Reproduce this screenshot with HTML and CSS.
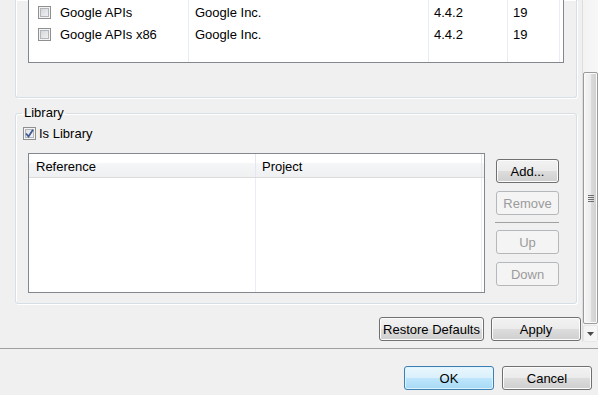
FILE: index.html
```html
<!DOCTYPE html>
<html>
<head>
    <title>Properties - Android</title>
    <link rel="stylesheet" href="styles.css">
</head>
<body>
    <div class="pane">
        <div class="content">
            <div class="group group-top">
                <div class="sdk-table">
                    <div class="col c1">
                        <div class="cell"><span class="check"></span>Google APIs</div>
                        <div class="cell"><span class="check"></span>Google APIs x86</div>
                    </div>
                    <div class="col c2">
                        <div class="cell">Google Inc.</div>
                        <div class="cell">Google Inc.</div>
                    </div>
                    <div class="col c3">
                        <div class="cell">4.4.2</div>
                        <div class="cell">4.4.2</div>
                    </div>
                    <div class="col c4">
                        <div class="cell">19</div>
                        <div class="cell">19</div>
                    </div>
                    <div class="filler"></div>
                </div>
            </div>

            <fieldset class="group library">
                <legend>Library</legend>
                <label class="lib-check">
                    <span class="check checked">
                        <svg width="9" height="9" viewBox="0 0 9 9"><path d="M1 4.5 L3.5 7.5 L8 0.8" fill="none" stroke="#3f5a92" stroke-width="1.8"/></svg>
                    </span>
                    Is Library
                </label>
                <div class="lib-row">
                    <div class="ref-table">
                        <div class="ref-head">
                            <div class="h1">Reference</div>
                            <div class="h2">Project</div>
                        </div>
                        <div class="ref-body">
                            <div class="b1"></div>
                            <div class="b2"></div>
                        </div>
                    </div>
                    <div class="side">
                        <button class="add">Add...</button>
                        <button class="remove" disabled>Remove</button>
                        <div class="side-sep"></div>
                        <button class="up" disabled>Up</button>
                        <button class="down" disabled>Down</button>
                    </div>
                </div>
            </fieldset>

            <div class="apply-row">
                <button class="restore">Restore Defaults</button>
                <button class="apply">Apply</button>
            </div>
        </div>

        <div class="scrollbar">
            <div class="thumb"><span class="grip"></span></div>
            <div class="arrow">
                <svg width="7" height="4" viewBox="0 0 7 4"><path d="M0 0 H7 L3.5 4 Z" fill="#4a4a4a"/></svg>
            </div>
        </div>
    </div>

    <div class="sep"></div>

    <div class="dialog-buttons">
        <button class="default">OK</button>
        <button>Cancel</button>
    </div>
</body>
</html>
```

FILE: styles.css
```css
* {
    box-sizing: border-box;
}

body {
    margin: 0;
    width: 598px;
    height: 395px;
    overflow: hidden;
    background-color: #f0f0f0;
    font-family: "Liberation Sans", Arial, sans-serif;
    font-size: 13px;
    color: #000;
}

.pane {
    display: flex;
    height: 342px;
}

.content {
    width: 581px;
}

/* group boxes */
.group {
    border: 1px solid #d5dfe5;
    border-radius: 3px;
    box-shadow: inset 1px 1px 0 #fff, 1px 1px 0 #fff;
}

.group-top {
    margin: 0 4px 0 15px;
    border-top: none;
    border-radius: 0 0 3px 3px;
    padding: 0 12px 34px 12px;
}

.sdk-table {
    display: flex;
    height: 63px;
    background-color: #fff;
    border: 1px solid #828790;
    border-top: none;
}

.sdk-table .col {
    border-right: 1px solid #e9eef6;
    padding-top: 1px;
}

.c1 { width: 160px; }
.c2 { width: 240px; }
.c3 { width: 79px; }
.c4 { width: 52px; }

.sdk-table .filler {
    flex: 1;
}

.cell {
    height: 22px;
    display: flex;
    align-items: center;
    white-space: nowrap;
}

.c1 .cell { padding-left: 9px; }
.c2 .cell { padding-left: 6px; }
.c3 .cell, .c4 .cell { padding-left: 5px; }

.c1 .check {
    margin-right: 9px;
}

/* checkbox */
.check {
    display: inline-flex;
    align-items: center;
    justify-content: center;
    width: 13px;
    height: 13px;
    flex: none;
    border: 1px solid #8e8f8f;
    background: linear-gradient(135deg, #cdd1d6, #f6f6f6);
    box-shadow: inset 0 0 0 1px #f4f4f4, inset 0 0 0 2px #b2b6bb;
}

.check.checked {
    background: linear-gradient(135deg, #dcdfe3, #f7f7f7);
}

/* library */
.library {
    margin: 7px 4px 0 15px;
    padding: 0;
    min-width: 0;
}

.library legend {
    margin-left: 6px;
    padding: 0 2px;
    line-height: 16px;
}

.lib-check {
    display: flex;
    align-items: center;
    height: 13px;
    gap: 3px;
    margin: 6px 0 0 7px;
}

.lib-row {
    display: flex;
    gap: 11px;
    margin: 13px 17px 10px 12px;
}

.ref-table {
    width: 457px;
    height: 140px;
    display: flex;
    flex-direction: column;
    background-color: #fff;
    border: 1px solid #828790;
}

.ref-head {
    display: flex;
    height: 24px;
    border-bottom: 1px solid #dcdcdc;
    background: linear-gradient(#fff 0, #fff 40%, #f5f6f7 40%, #eff0f2 100%);
}

.ref-head div {
    display: flex;
    align-items: center;
    padding-top: 2px;
    border-right: 1px solid #e3e8ef;
}

.ref-head .h1 { width: 227px; padding-left: 7px; }
.ref-head .h2 { width: 226px; padding-left: 6px; }

.ref-body {
    flex: 1;
    display: flex;
}

.ref-body div {
    border-right: 1px solid #e9eef6;
}

.ref-body .b1 { width: 227px; }
.ref-body .b2 { width: 226px; }

.side {
    width: 63px;
    display: flex;
    flex-direction: column;
}

.side .add { margin-top: 6px; }
.side .remove { margin-top: 8px; }
.side .up { margin-top: 7px; }
.side .down { margin-top: 8px; }

.side-sep {
    height: 1px;
    margin: 7px 0 0 -1px;
    background-color: #a0a0a0;
}

/* buttons */
button {
    font-family: inherit;
    font-size: 13px;
    color: #000;
    height: 24px;
    padding: 0;
    border: 1px solid #707070;
    border-radius: 3px;
    background: linear-gradient(#f2f2f2 0, #ebebeb 50%, #dddddd 50%, #cfcfcf 100%);
    box-shadow: inset 0 0 0 1px #fcfcfc;
}

button:disabled {
    color: #9b9b9b;
    border-color: #b5b8bb;
    background: #f4f4f4;
    box-shadow: none;
}

button.default {
    border-color: #3c7fb1;
    background: linear-gradient(#eaf6fd 0, #d9f0fc 50%, #bee6fd 50%, #a7d9f5 100%);
    box-shadow: inset 0 0 0 1px #dff4ff;
}

.apply-row {
    display: flex;
    justify-content: flex-end;
    gap: 7px;
    margin-top: 13px;
}

.restore { width: 105px; }
.apply { width: 90px; }

/* scrollbar */
.scrollbar {
    width: 17px;
    display: flex;
    flex-direction: column;
    background: linear-gradient(to right, #f0f0f0 0, #f0f0f0 1px, #dedede 1px, #dedede 2px, #f3f3f3 2px, #f7f7f7 100%);
}

.thumb {
    display: flex;
    align-items: center;
    justify-content: center;
    width: 15px;
    height: 252px;
    margin: 72px 0 0 2px;
    border: 1px solid #9a9a9a;
    border-radius: 2px;
    background: linear-gradient(to right, #f7f7f7, #ececec 50%, #dcdcdc 50%, #d0d0d0);
    box-shadow: inset 0 0 0 1px #fafafa;
}

.grip {
    width: 6px;
    height: 7px;
    background: repeating-linear-gradient(#6e6e6e 0, #6e6e6e 1px, transparent 1px, transparent 2px);
}

.arrow {
    display: flex;
    align-items: center;
    justify-content: center;
    height: 17px;
    margin: 1px 0 0 2px;
    border: 1px solid #e6e6e6;
    border-radius: 2px;
}

/* dialog footer */
.sep {
    height: 1px;
    margin-top: 6px;
    background-color: #a0a0a0;
}

.dialog-buttons {
    display: flex;
    justify-content: flex-end;
    gap: 8px;
    padding: 17px 6px 0 0;
}

.dialog-buttons button {
    width: 90px;
}
```
